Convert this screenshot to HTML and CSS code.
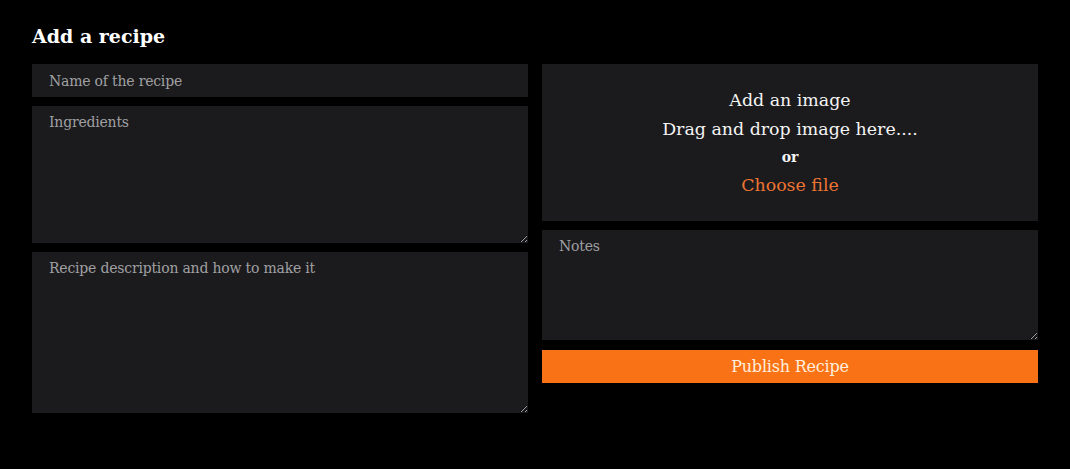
FILE: index.html
```html
<!DOCTYPE html>
<html lang="en">
<head>
<meta charset="utf-8">
<title>Add a recipe</title>
<link rel="stylesheet" href="styles.css">
</head>
<body>
<main class="page">
  <h1 class="title">Add a recipe</h1>
  <form class="recipe-form">
    <div class="col">
      <input class="field field-name" type="text" placeholder="Name of the recipe">
      <textarea class="field field-ingredients" placeholder="Ingredients"></textarea>
      <textarea class="field field-description" placeholder="Recipe description and how to make it"></textarea>
    </div>
    <div class="col">
      <div class="dropzone">
        <div class="dz-line">Add an image</div>
        <div class="dz-line">Drag and drop image here....</div>
        <div class="dz-or">or</div>
        <div class="dz-choose">Choose file</div>
      </div>
      <textarea class="field field-notes" placeholder="Notes"></textarea>
      <button class="publish" type="button">Publish Recipe</button>
    </div>
  </form>
</main>
</body>
</html>
```

FILE: styles.css
```css
html, body {
  margin: 0;
  padding: 0;
  background: #000;
}
body {
  font-family: "DejaVu Serif", "Liberation Serif", serif;
  color: #fff;
}
.page {
  padding: 24px 32px 0 32px;
}
.title {
  margin: 0 0 16px 0;
  font-size: 19px;
  line-height: 24px;
  font-weight: 700;
  color: #fff;
}
.recipe-form {
  display: grid;
  grid-template-columns: 1fr 1fr;
  column-gap: 14px;
}
.col {
  display: flex;
  flex-direction: column;
  gap: 9px;
}
.field {
  display: block;
  box-sizing: border-box;
  width: 100%;
  margin: 0;
  border: none;
  outline: none;
  background: #1b1b1e;
  color: #ddd;
  font-family: "DejaVu Serif", "Liberation Serif", serif;
  font-size: 14px;
  letter-spacing: -0.2px;
  line-height: 18px;
  padding: 7px 17px;
}
.field::placeholder {
  color: #a0a0a2;
}
.field-name {
  height: 33px;
  padding-top: 0;
  padding-bottom: 0;
}
.field-ingredients {
  height: 137px;
  resize: vertical;
}
.field-description {
  height: 161px;
  resize: vertical;
}
.field-notes {
  height: 110px;
  resize: vertical;
}
.dropzone {
  box-sizing: border-box;
  height: 157px;
  background: #1b1b1e;
  display: flex;
  flex-direction: column;
  align-items: center;
  padding-top: 22px;
  text-align: center;
}
.dz-line {
  font-size: 17.4px;
  line-height: 29px;
  color: #f4f4f4;
}
.dz-or {
  font-size: 14px;
  line-height: 27px;
  font-weight: 700;
  color: #f4f4f4;
}
.dz-choose {
  font-size: 17.4px;
  line-height: 29px;
  color: #ee7433;
  cursor: pointer;
}
.publish {
  margin-top: 1px;
  height: 33px;
  border: none;
  background: #f97316;
  color: #ffeedd;
  font-family: "DejaVu Serif", "Liberation Serif", serif;
  font-size: 16px;
  letter-spacing: -0.2px;
  cursor: pointer;
}
```
